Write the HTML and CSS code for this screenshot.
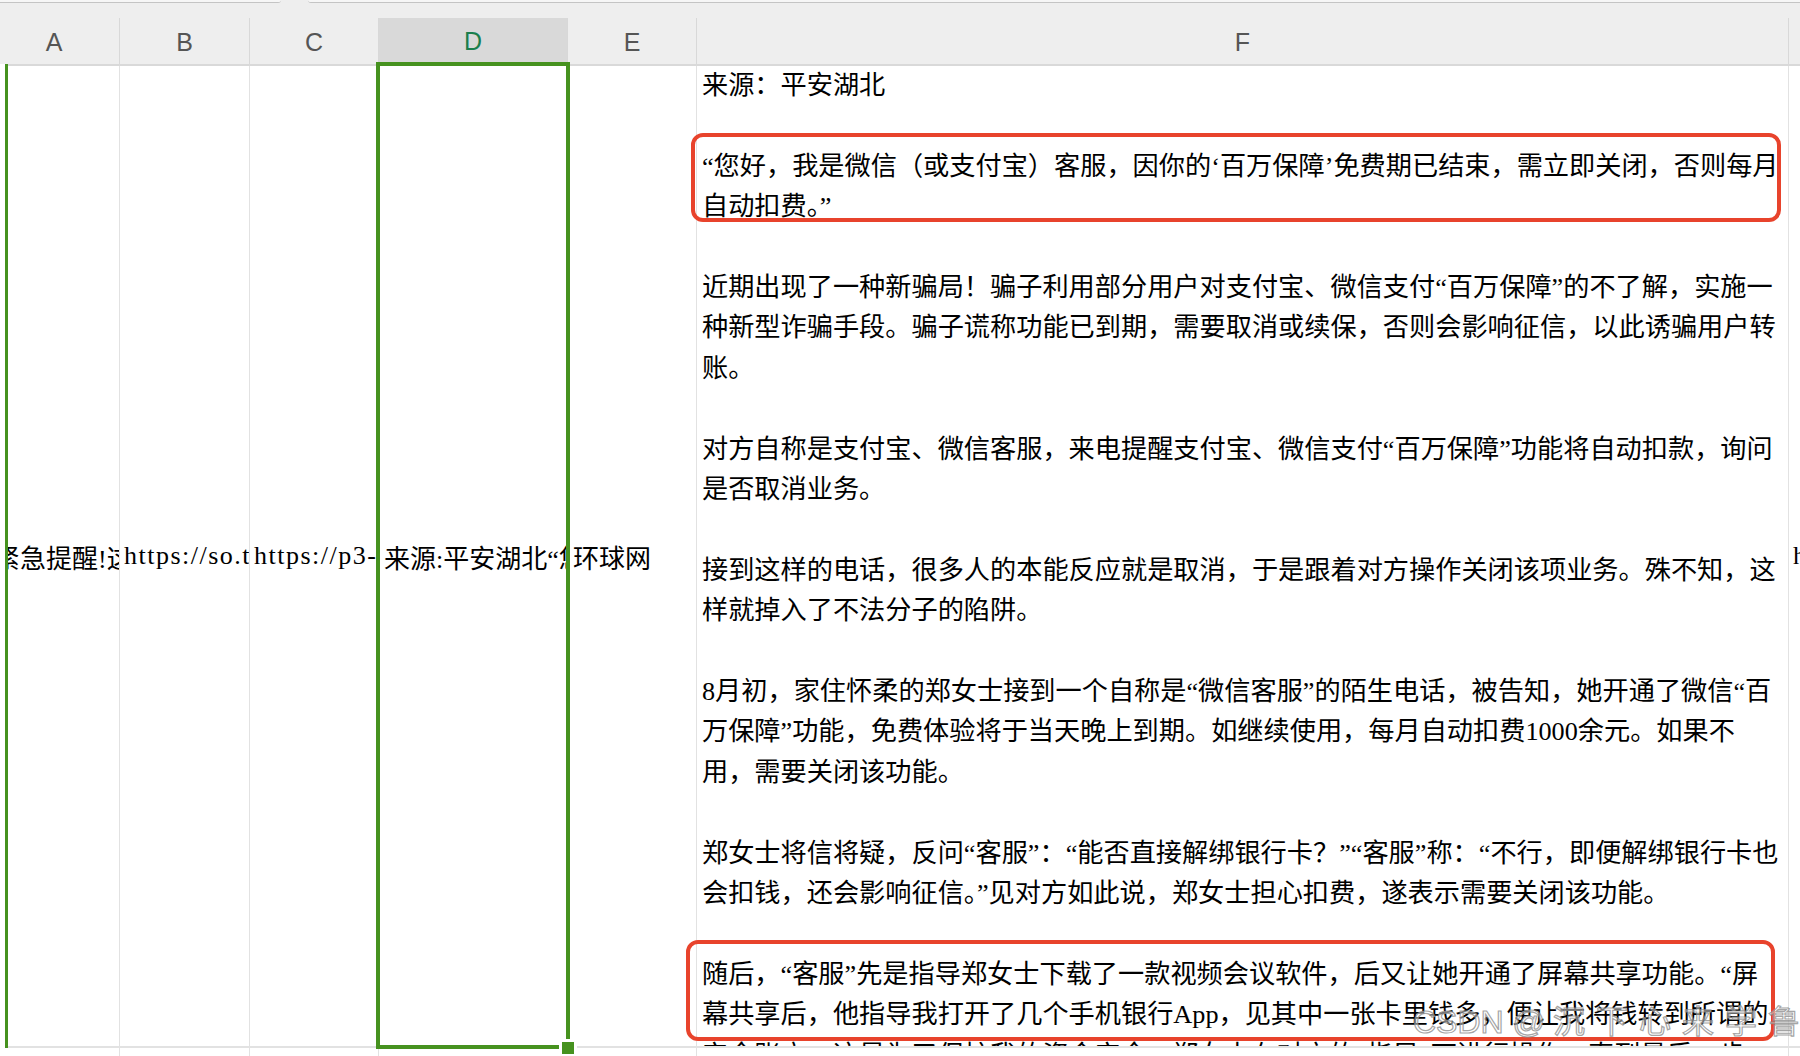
FILE: index.html
```html
<!DOCTYPE html>
<html lang="zh-CN">
    <head>
        <meta charset="UTF-8" />
        <meta name="viewport" content="width=device-width, initial-scale=1.0" />
        <title>百万保障 - 工作表</title>
        <link rel="stylesheet" href="styles.css">
    </head>
    <body>
        <div class="tabs">
            <span class="tab"></span>
            <span class="tab tab-wide"></span>
        </div>

        <div class="sheet">
            <div class="row head">
                <div class="col-head">A</div>
                <div class="col-head">B</div>
                <div class="col-head">C</div>
                <div class="col-head active">D</div>
                <div class="col-head">E</div>
                <div class="col-head">F</div>
                <div class="col-head"></div>
            </div>

            <div class="row tall">
                <div class="cell">紧急提醒!这个“百万保障”功能别乱关</div>
                <div class="cell latin">https://so.toutiao.com/s/search</div>
                <div class="cell latin">https://p3-sign.toutiaoimg.com</div>
                <div class="cell">来源:平安湖北“您好，我是微信</div>
                <div class="cell">环球网</div>
                <div class="cell text">
                    <p>来源：平安湖北</p>
                    <p>“您好，我是微信（或支付宝）客服，因你的‘百万保障’免费期已结束，需立即关闭，否则每月<br>自动扣费。”</p>
                    <p>近期出现了一种新骗局！骗子利用部分用户对支付宝、微信支付“百万保障”的不了解，实施一<br>种新型诈骗手段。骗子谎称功能已到期，需要取消或续保，否则会影响征信，以此诱骗用户转<br>账。</p>
                    <p>对方自称是支付宝、微信客服，来电提醒支付宝、微信支付“百万保障”功能将自动扣款，询问<br>是否取消业务。</p>
                    <p>接到这样的电话，很多人的本能反应就是取消，于是跟着对方操作关闭该项业务。殊不知，这<br>样就掉入了不法分子的陷阱。</p>
                    <p>8月初，家住怀柔的郑女士接到一个自称是“微信客服”的陌生电话，被告知，她开通了微信“百<br>万保障”功能，免费体验将于当天晚上到期。如继续使用，每月自动扣费1000余元。如果不<br>用，需要关闭该功能。</p>
                    <p>郑女士将信将疑，反问“客服”：“能否直接解绑银行卡？”“客服”称：“不行，即便解绑银行卡也<br>会扣钱，还会影响征信。”见对方如此说，郑女士担心扣费，遂表示需要关闭该功能。</p>
                    <p>随后，“客服”先是指导郑女士下载了一款视频会议软件，后又让她开通了屏幕共享功能。“屏<br>幕共享后，他指导我打开了几个手机银行App，见其中一张卡里钱多，便让我将钱转到所谓的<br>安全账户，这是为了保护我的资金安全。”郑女士在对方的“指导”下进行操作，直到最后一步</p>
                </div>
                <div class="cell latin">https://www.huanqiu.com</div>
            </div>

            <div class="row short">
                <div class="cell"></div>
                <div class="cell"></div>
                <div class="cell"></div>
                <div class="cell"></div>
                <div class="cell"></div>
                <div class="cell"></div>
                <div class="cell"></div>
            </div>
        </div>

        <div class="row-mark"></div>
        <div class="selection"></div>
        <div class="fill-handle"></div>

        <div class="note note-top"></div>
        <div class="note note-bottom"></div>

        <div class="watermark">CSDN @<span>沉下心来学鲁班</span></div>
    </body>
</html>
```

FILE: styles.css
```css
* {
    margin: 0;
    padding: 0;
    box-sizing: border-box;
}

body {
    width: 1800px;
    height: 1056px;
    overflow: hidden;
    position: relative;
    background: #fff;
    font-family: "Liberation Serif", "Noto Sans CJK SC", serif;
    color: #000;
}

.tabs {
    height: 3px;
    display: flex;
    gap: 27px;
    background: #eeeeee;
}

.tab {
    width: 291px;
    margin-left: -10px;
    background: #f6f6f6;
    border-bottom: 1.5px solid #c4c4c4;
    border-radius: 0 0 6px 6px;
}

.tab-wide {
    flex: 1;
    margin-left: 0;
    margin-right: -10px;
}

.sheet {
    margin-left: -11px;
    --cols: 131px 130px 129px 189px 129px 1092px 200px;
}

.row {
    display: grid;
    grid-template-columns: var(--cols);
}

.head {
    background: #eeeeee;
    padding-top: 15px;
    height: 63px;
    border-bottom: 2px solid #d9d9d9;
}

.col-head {
    border-right: 1.5px solid #d8d8d8;
    display: flex;
    justify-content: center;
    align-items: center;
    padding-top: 2px;
    font-family: "Liberation Sans", Arial, sans-serif;
    font-size: 25px;
    color: #555;
}

.col-head.active {
    background: #d9d9d9;
    color: #1b7f4d;
    margin-bottom: 2px;
}

.tall {
    height: 982px;
    border-bottom: 2px solid #e2e2e2;
}

.short {
    height: 20px;
}

.cell {
    border-right: 1px solid #e2e2e2;
    overflow: hidden;
    white-space: nowrap;
    padding-left: 5px;
    font-size: 26px;
    display: flex;
    align-items: center;
}

.cell.latin {
    letter-spacing: 1.5px;
    padding-left: 4px;
}

.cell.text {
    display: block;
    font-size: 26.2px;
    line-height: 40.4px;
    padding-left: 5px;
}

.cell.text p {
    margin-bottom: 40.4px;
}

.row-mark {
    position: absolute;
    left: 0;
    top: 64px;
    width: 7.5px;
    height: 984px;
    background: #fff;
    border-right: 3.5px solid #46921f;
}

.selection {
    position: absolute;
    left: 376px;
    top: 62px;
    width: 194px;
    height: 987px;
    border: 4px solid #46921f;
}

.fill-handle {
    position: absolute;
    left: 559px;
    top: 1039px;
    width: 18px;
    height: 18px;
    background: #46921f;
    border: 3px solid #fff;
}

.note {
    position: absolute;
    border: 4px solid #e8432c;
    border-radius: 12px;
}

.note-top {
    left: 691px;
    top: 133px;
    width: 1090px;
    height: 89px;
}

.note-bottom {
    left: 686px;
    top: 940px;
    width: 1089px;
    height: 101px;
}

.watermark {
    position: absolute;
    left: 1413px;
    top: 1006px;
    font-family: "Liberation Sans", "Noto Sans CJK SC", sans-serif;
    font-size: 32px;
    line-height: 1;
    white-space: nowrap;
    color: rgba(255, 255, 255, 0.45);
    -webkit-text-stroke: 1.2px rgba(140, 140, 140, 0.8);
}

.watermark span {
    margin-left: 8px;
    letter-spacing: 11px;
}
```
